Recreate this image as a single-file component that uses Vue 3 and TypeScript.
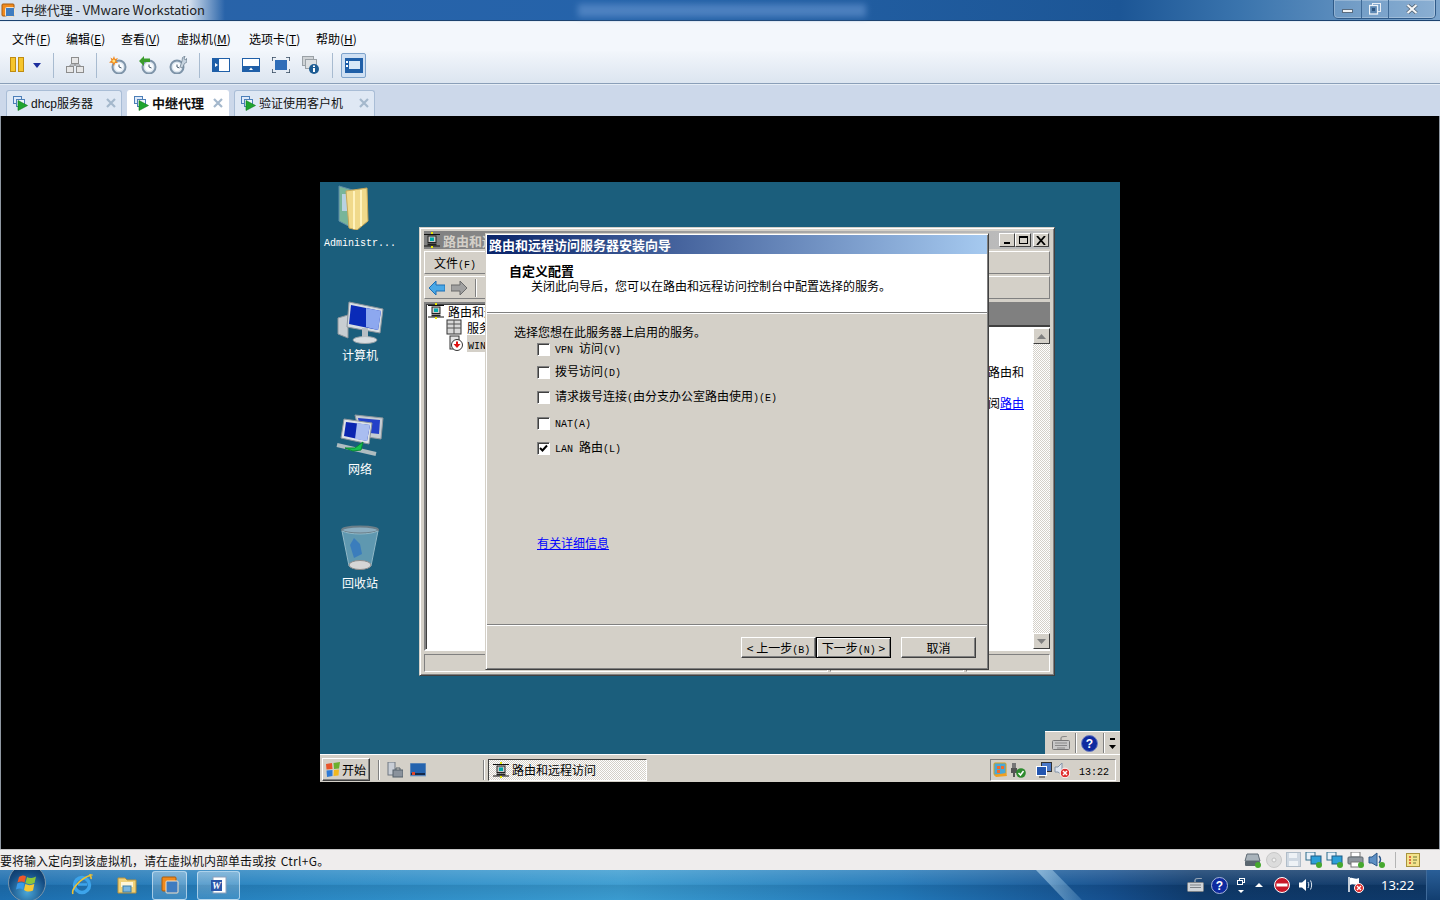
<script setup lang="ts">
const menus = [
  { label: '文件', key: 'F', width: 54 },
  { label: '编辑', key: 'E', width: 55 },
  { label: '查看', key: 'V', width: 56 },
  { label: '虚拟机', key: 'M', width: 72 },
  { label: '选项卡', key: 'T', width: 67 },
  { label: '帮助', key: 'H', width: 40 },
]

const tabs = [
  { name: 'dhcp服务器', width: 116, active: false },
  { name: '中继代理', width: 102, active: true },
  { name: '验证使用客户机', width: 141, active: false },
]

const services = [
  { text: 'VPN 访问(V)', checked: false, cls: 'r1' },
  { text: '拨号访问(D)', checked: false, cls: 'r2' },
  { text: '请求拨号连接(由分支办公室路由使用)(E)', checked: false, cls: 'r3' },
  { text: 'NAT(A)', checked: false, cls: 'r4' },
  { text: 'LAN 路由(L)', checked: true, cls: 'r5' },
]

// guest fonts: latin is half width, so it goes in a smaller mono
function segs(text: string) {
  return text.split(/([\x20-\x7e]+)/).filter(Boolean).map((t) => ({
    t,
    lat: /^[\x20-\x7e]+$/.test(t),
  }))
}
</script>

<template>
  <div class="app">
    <svg class="defs" width="0" height="0">
      <defs>
        <symbol id="vm" viewBox="0 0 16 16">
          <rect x="1.5" y="1.5" width="8" height="7" fill="#dfeafa" stroke="#4d7fb8" />
          <rect x="4.5" y="4.5" width="8" height="7" fill="#eef4fc" stroke="#4d7fb8" />
          <path d="M6 5.5 15.5 10.5 6 15.5Z" fill="#1fa52e" stroke="#0f7a1d" stroke-width=".6" />
        </symbol>
        <symbol id="route" viewBox="0 0 16 16">
          <path d="M0 2.5h16M0 14h16" stroke="#111" stroke-width="1" />
          <rect x="7" y="0" width="2" height="2" fill="#e8e800" />
          <rect x="7" y="14" width="2" height="2" fill="#e8e800" />
          <rect x="4" y="4" width="8" height="6.5" fill="#c9c9c9" stroke="#222" />
          <rect x="6" y="5.5" width="4" height="3.5" fill="#0aa" />
          <path d="M3.5 12.5h9" stroke="#222" stroke-width="2" />
        </symbol>
        <symbol id="clock" viewBox="0 0 18 18">
          <circle cx="10" cy="11" r="6.5" fill="#dce6ef" stroke="#7d93a8" stroke-width="2" />
          <circle cx="10" cy="11" r="4" fill="#fbfdff" />
          <path d="M10 8.5V11L12.5 12" fill="none" stroke="#44586a" />
        </symbol>
      </defs>
    </svg>

    <header class="titlebar">
      <svg class="app-ico" width="15" height="15" viewBox="0 0 15 15">
        <rect x="1" y="1" width="12" height="12" rx="1" fill="#f08a1d" stroke="#a85a0c" />
        <rect x="4.5" y="4.5" width="9" height="9" rx="1" fill="#3f7cc0" stroke="#f4e2c8" />
      </svg>
      <span class="title-text">中继代理 - VMware Workstation</span>
      <span class="title-blur"></span>
      <div class="win-btns">
        <button class="wb wb-min"><i></i></button>
        <button class="wb wb-max">
          <svg width="12" height="12" viewBox="0 0 12 12">
            <rect x="3.5" y=".5" width="8" height="8" fill="none" stroke="#e8eef5" />
            <rect x=".5" y="2.5" width="8" height="8.5" fill="#5c87b3" stroke="#eef3f8" stroke-width="1.3" />
            <rect x="3" y="5" width="3" height="3" fill="#2f557f" />
          </svg>
        </button>
        <button class="wb wb-close">
          <svg width="12" height="10" viewBox="0 0 12 10">
            <path d="M1.5 1 10.5 9M10.5 1 1.5 9" stroke="#50606f" stroke-width="3.6" />
            <path d="M1.5 1 10.5 9M10.5 1 1.5 9" stroke="#f4f6f8" stroke-width="2.2" />
          </svg>
        </button>
      </div>
    </header>

    <nav class="menubar">
      <span v-for="m in menus" :key="m.key" class="menu" :style="{ width: m.width + 'px' }">{{ m.label }}(<u>{{ m.key }}</u>)</span>
    </nav>

    <div class="toolbar">
      <svg class="t-pause" width="14" height="16" viewBox="0 0 14 16">
        <rect x=".5" y=".5" width="5" height="14" fill="#f6c52c" stroke="#c08c10" />
        <rect x="8.5" y=".5" width="5" height="14" fill="#f6c52c" stroke="#c08c10" />
      </svg>
      <svg width="8" height="5" viewBox="0 0 8 5"><path d="M0 0h8L4 5Z" fill="#1d2f9e" /></svg>
      <i class="t-sep"></i>
      <svg width="18" height="16" viewBox="0 0 18 16">
        <g fill="#e7e7e7" stroke="#8d8d8d">
          <rect x="5.5" y=".5" width="7" height="6" />
          <rect x=".5" y="9.5" width="7" height="6" />
          <rect x="10.5" y="9.5" width="7" height="6" />
        </g>
        <path d="M9 7v2M4 9V8h10v1" fill="none" stroke="#8d8d8d" />
      </svg>
      <i class="t-sep"></i>
      <svg width="18" height="18" viewBox="0 0 18 18">
        <use href="#clock" />
        <path d="M5 0 6 3 9 2 7 5 9 7 6 7 5 10 3.500 7 0 6.500 2.500 4.500 1.500 1.500 3.800 3Z" fill="#f0881e" />
        <circle cx="4.800" cy="5" r="1.500" fill="#ffe27a" />
      </svg>
      <svg width="18" height="18" viewBox="0 0 18 18">
        <use href="#clock" />
        <path d="M0 5 5 0V2.500H11V6H5V10Z" fill="#3a9c2c" />
      </svg>
      <svg width="18" height="18" viewBox="0 0 18 18">
        <use href="#clock" x="-2" />
        <path d="M11 11 13 5 13.500 1.500 16 0 15 3 17.500 4 18 2V6L15.500 7.500 13.500 12Z" fill="#c6d3df" stroke="#66788a" stroke-width=".7" />
      </svg>
      <i class="t-sep"></i>
      <svg width="18" height="14" viewBox="0 0 18 14">
        <rect width="18" height="14" fill="#1f5fa8" />
        <rect x="7" y="1" width="10" height="12" fill="#fff" />
        <path d="M3 5 6 7 3 9Z" fill="#fff" />
      </svg>
      <svg width="18" height="14" viewBox="0 0 18 14">
        <rect width="18" height="14" fill="#1f5fa8" />
        <rect x="1" y="1" width="16" height="7" fill="#fff" />
        <path d="M7 12 9 9.500 11 12Z" fill="#fff" />
      </svg>
      <svg width="18" height="16" viewBox="0 0 18 16">
        <rect x="3" y="3" width="12" height="10" fill="#2f6db8" />
        <path d="M0 4V0H4M14 0H18V4M18 12V16H14M4 16H0V12" fill="none" stroke="#33485e" stroke-width="1.500" />
      </svg>
      <svg width="18" height="18" viewBox="0 0 18 18">
        <rect x=".5" y=".5" width="11" height="9" fill="#cfd3d6" stroke="#9aa1a6" />
        <rect x="3.500" y="3.500" width="11" height="9" fill="#dde0e2" stroke="#9aa1a6" />
        <circle cx="12" cy="13" r="5" fill="#1d5c93" />
        <rect x="11" y="12" width="2" height="4" fill="#fff" />
        <rect x="11" y="9.500" width="2" height="1.500" fill="#fff" />
      </svg>
      <i class="t-sep"></i>
      <span class="t-on">
        <svg width="18" height="15" viewBox="0 0 18 15">
          <rect width="18" height="15" fill="#1f5fa8" />
          <rect x="4" y="3" width="11" height="8" fill="#d9e9f8" />
          <rect x="1" y="3" width="2" height="2" fill="#fff" />
          <rect x="1" y="7" width="2" height="2" fill="#fff" />
        </svg>
      </span>
    </div>

    <div class="tabstrip">
      <div
        v-for="t in tabs"
        :key="t.name"
        class="tab"
        :class="{ active: t.active }"
        :style="{ width: t.width + 'px' }"
      >
        <svg width="16" height="16"><use href="#vm" /></svg>
        <span class="tab-name">{{ t.name }}</span>
        <svg class="tab-x" width="10" height="10" viewBox="0 0 10 10">
          <path d="M1 1 9 9M9 1 1 9" stroke="#a4b8cc" stroke-width="2.200" />
        </svg>
      </div>
    </div>

    <main class="stage">
      <section class="guest">
        <div class="d-icon" style="left: 0; top: 2px">
          <svg width="48" height="46" viewBox="0 0 48 46">
            <path d="M3 2 20 7V46L3 37Z" fill="#78b59a" stroke="#5f8ca8" />
            <rect x="6" y="10" width="7" height="17" fill="#b8d2e2" />
            <path d="M10 7 31 4 32 37 21 46 13 44Z" fill="#f0d98a" stroke="#c7a85a" />
            <path d="M18 7V45M25 6V42" stroke="#fff2bc" stroke-width="2" />
          </svg>
          <span class="d-label"><span class="lat">Administr...</span></span>
        </div>
        <div class="d-icon" style="left: 0; top: 114px">
          <svg width="48" height="48" viewBox="0 0 48 48">
            <path d="M2 22 12 19V42L2 38Z" fill="#c8ced2" stroke="#8d969c" />
            <path d="M13 6 47 13 44 37 11 31Z" fill="#d6dde2" stroke="#8b959c" />
            <path d="M15 9 45 15 42 34 13 28Z" fill="#0a2bb8" />
            <path d="M30 12 45 15 42 34 30 31Z" fill="#8da8ef" />
            <ellipse cx="29" cy="44" rx="12" ry="3.500" fill="#d8dde0" stroke="#9aa3a8" />
            <path d="M26 32H32V41H26Z" fill="#b8bfc4" />
          </svg>
          <span class="d-label">计算机</span>
        </div>
        <div class="d-icon" style="left: 0; top: 228px">
          <svg width="48" height="48" viewBox="0 0 48 48">
            <path d="M19 5 47 8 45 29 24 26Z" fill="#c5ccd2" stroke="#8d969c" />
            <path d="M22 8 44 10 43 24 25 22Z" fill="#2440c8" />
            <path d="M8 9 36 13 33 34 5 28Z" fill="#dde2e6" stroke="#8d969c" />
            <path d="M10 12 34 15 31 31 8 26Z" fill="#0a25b0" />
            <path d="M21 13 34 15 31 31 19 29Z" fill="#a9bdf0" />
            <path d="M1 35 40 44" stroke="#aebcc0" stroke-width="4" />
            <path d="M9 38H19L27 32 25 40 17 41Z" fill="#18c24f" stroke="#0a8a34" />
          </svg>
          <span class="d-label">网络</span>
        </div>
        <div class="d-icon" style="left: 0; top: 342px">
          <svg width="48" height="48" viewBox="0 0 48 48">
            <ellipse cx="24" cy="6" rx="18" ry="3.500" fill="#8caec0" stroke="#6b7e88" stroke-width="2" />
            <path d="M6 7 13 42C18 46 30 46 35 42L42 7C34 11 14 11 6 7Z" fill="#5f98b0" stroke="#8fb7c6" />
            <path d="M14 21 18 14 24 20 26 30 18 34Z" fill="#2f74c0" opacity=".75" />
            <ellipse cx="24" cy="41" rx="11" ry="4.500" fill="#d6d6d6" stroke="#8d8d8d" />
          </svg>
          <span class="d-label">回收站</span>
        </div>

        <!-- mmc window behind the wizard -->
        <div class="win mmc">
          <div class="mmc-title">
            <svg width="16" height="16"><use href="#route" /></svg>
            <span class="mmc-name">路由和远程访问</span>
            <span class="caps">
              <button class="cap"><i class="c-min"></i></button>
              <button class="cap"><i class="c-max"></i></button>
              <button class="cap c-close"><svg width="10" height="9" viewBox="0 0 10 9"><path d="M1 0 9 9M9 0 1 9" stroke="#000" stroke-width="1.800" /></svg></button>
            </span>
          </div>
          <div class="mmc-row">
            <span class="gtext">文件<span class="lat">(F)</span></span>
          </div>
          <div class="mmc-row tools">
            <svg width="16" height="14" viewBox="0 0 16 14"><path d="M0 7 7 0V4H16V10H7V14Z" fill="#4aa8e6" stroke="#1c6fb5" /></svg>
            <svg width="16" height="14" viewBox="0 0 16 14"><path d="M16 7 9 0V4H0V10H9V14Z" fill="#a0a0a0" stroke="#6b6b6b" /></svg>
            <i class="tool-sep"></i>
            <svg width="12" height="14" viewBox="0 0 12 14"><rect x="1" y="1" width="9" height="12" fill="#f0d98a" /></svg>
          </div>
          <div class="mmc-main">
            <div class="tree">
              <div class="node">
                <svg width="16" height="16"><use href="#route" /></svg>
                <span>路由和远程访问</span>
              </div>
              <div class="node n2">
                <svg width="16" height="16" viewBox="0 0 16 16">
                  <rect x="1" y="1" width="14" height="14" fill="#d8d8d8" stroke="#333" />
                  <path d="M1 5h14M1 9h14M8 1v14" stroke="#555" />
                </svg>
                <span>服务器状态</span>
              </div>
              <div class="node n3">
                <svg width="16" height="16" viewBox="0 0 16 16">
                  <rect x="2" y="1" width="9" height="13" fill="#e4e4e4" stroke="#333" />
                  <circle cx="9" cy="10" r="5.500" fill="#fff" stroke="#333" />
                  <path d="M9 13 5.500 9H8V6.500H10V9H12.500Z" fill="#e01010" />
                </svg>
                <span class="sel"><span class="lat">WIN-SERVER</span></span>
              </div>
            </div>
            <div class="detail">
              <div class="detail-head"></div>
              <div class="detail-body">
                <div class="detail-text">
                  <p class="l1">要启用路由和</p>
                  <p class="l2">请查阅<a>路由</a></p>
                </div>
                <div class="vscroll">
                  <button class="sb-btn"><svg width="9" height="5" viewBox="0 0 9 5"><path d="M4.500 0 9 5H0Z" fill="#808080" /></svg></button>
                  <span class="sb-track"></span>
                  <button class="sb-btn"><svg width="9" height="5" viewBox="0 0 9 5"><path d="M4.500 5 9 0H0Z" fill="#808080" /></svg></button>
                </div>
              </div>
            </div>
          </div>
          <div class="mmc-status">
            <span class="st-cell"></span>
            <span class="st-cell w2"></span>
            <span class="st-cell w3"></span>
          </div>
        </div>

        <!-- setup wizard -->
        <div class="win wizard">
          <div class="wz-title">路由和远程访问服务器安装向导</div>
          <div class="wz-head">
            <h1>自定义配置</h1>
            <p>关闭此向导后，您可以在路由和远程访问控制台中配置选择的服务。</p>
          </div>
          <div class="wz-body">
            <p class="wz-intro">选择您想在此服务器上启用的服务。</p>
            <label v-for="s in services" :key="s.text" class="chk" :class="s.cls">
              <span class="box">
                <svg v-if="s.checked" width="9" height="9" viewBox="0 0 9 9">
                  <path d="M1 4 3.500 6.500 8 1.500" fill="none" stroke="#000" stroke-width="2" />
                </svg>
              </span>
              <span class="gtext">
                <span v-for="(p, i) in segs(s.text)" :key="i" :class="{ lat: p.lat }">{{ p.t }}</span>
              </span>
            </label>
            <a class="more">有关详细信息</a>
          </div>
          <div class="wz-foot">
            <button class="btn">&lt; 上一步<span class="lat">(B)</span></button>
            <button class="btn primary">下一步<span class="lat">(N)</span> &gt;</button>
            <button class="btn cancel">取消</button>
          </div>
        </div>

        <!-- guest bottom -->
        <div class="langbar">
          <svg width="18" height="14" viewBox="0 0 18 14">
            <rect x=".5" y="4.500" width="17" height="9" rx="1" fill="#c8c8c8" stroke="#777" />
            <path d="M3 7h12M3 9.500h12M5 12h8" stroke="#888" />
            <path d="M9 4V2C9 0 13 1 15 0" fill="none" stroke="#777" />
          </svg>
          <i class="lb-sep"></i>
          <svg width="17" height="17" viewBox="0 0 17 17">
            <circle cx="8.500" cy="8.500" r="8" fill="#0e2aa0" stroke="#6a7cc0" />
            <text x="8.500" y="13" text-anchor="middle" fill="#fff" font-size="12" font-weight="700" font-family="Liberation Sans, sans-serif">?</text>
          </svg>
          <i class="lb-sep"></i>
          <span class="lb-arrows">
            <i class="dash"></i>
            <svg width="7" height="4" viewBox="0 0 7 4"><path d="M0 0h7L3.500 4Z" fill="#000" /></svg>
          </span>
        </div>

        <div class="g-taskbar">
          <button class="g-start">
            <svg width="16" height="15" viewBox="0 0 16 15">
              <path d="M1 2 7 1 7.500 7 1.500 7.500Z" fill="#e8552a" />
              <path d="M8.500 1 15 0 14 6.500 9 7Z" fill="#6cb02e" />
              <path d="M1.500 8.500 7.500 8 7.500 14 2 15Z" fill="#2e7ad6" />
              <path d="M9 8 14 7.500 13.500 13.500 8.500 14Z" fill="#f2b81e" />
            </svg>
            <span>开始</span>
          </button>
          <i class="g-sep"></i>
          <svg class="ql1" width="16" height="16" viewBox="0 0 16 16">
            <rect x="1" y="0" width="7" height="13" fill="#c9ced6" stroke="#6f7780" />
            <rect x="6" y="8" width="10" height="7" fill="#8a929c" stroke="#55606b" />
            <path d="M9 8V6h4v2" fill="none" stroke="#55606b" />
          </svg>
          <svg class="ql2" width="16" height="14" viewBox="0 0 16 14">
            <rect width="16" height="13" fill="#2463ae" stroke="#8aa4c0" />
            <rect x="1" y="10" width="14" height="2" fill="#13284a" />
            <rect x="2" y="9" width="3" height="3" fill="#e0452a" />
          </svg>
          <i class="g-sep s2"></i>
          <div class="g-task">
            <svg width="16" height="16"><use href="#route" /></svg>
            <span>路由和远程访问</span>
          </div>
          <div class="g-tray">
            <svg width="15" height="16" viewBox="0 0 15 16">
              <rect x="1" y="1" width="12" height="12" rx="1" fill="#48a8d8" stroke="#d8a020" />
              <path d="M4 4h3v3H4zM8 4h3v3H8zM4 8h3v3H4z" fill="#f26b2a" />
              <path d="M1 13 13 11 14 14 3 15Z" fill="#f0a020" />
            </svg>
            <svg width="16" height="16" viewBox="0 0 16 16">
              <rect x="2" y="1" width="4" height="8" fill="#777" />
              <path d="M1 6h6v5H5v4H3v-4H1Z" fill="#555" />
              <circle cx="11" cy="11" r="4.800" fill="#2e8b2e" />
              <path d="M8.500 11 10.500 13 13.500 9" fill="none" stroke="#fff" stroke-width="1.500" />
            </svg>
            <svg class="tr3" width="16" height="16" viewBox="0 0 16 16">
              <rect x="5.500" y=".5" width="10" height="9" fill="#4a78c8" stroke="#333" />
              <rect x=".5" y="4.500" width="10" height="9" fill="#2456b0" stroke="#fff" />
              <path d="M3 15h6" stroke="#333" />
            </svg>
            <svg width="16" height="16" viewBox="0 0 16 16">
              <path d="M1 5H4L8 1V13L4 10H1Z" fill="#dfe5ee" stroke="#8494a8" />
              <circle cx="11" cy="11" r="4.800" fill="#e03030" stroke="#fff" />
              <path d="M9 9 13 13M13 9 9 13" stroke="#fff" stroke-width="1.500" />
            </svg>
            <span class="g-clock"><span class="lat">13:22</span></span>
          </div>
        </div>
      </section>
    </main>

    <footer class="statusbar">
      <span class="st-msg">要将输入定向到该虚拟机，请在虚拟机内部单击或按 <span class="st-key">Ctrl+G</span>。</span>
      <div class="devices">
        <svg width="18" height="16" viewBox="0 0 18 16">
          <path d="M3 2H14L16 9H1Z" fill="#a9b3bb" stroke="#5f6b75" />
          <rect x="1" y="9" width="15" height="5" rx="1" fill="#5a6670" />
          <circle cx="14" cy="13" r="3" fill="#46a82e" />
        </svg>
        <svg width="18" height="16" viewBox="0 0 18 16">
          <circle cx="9" cy="8" r="7.500" fill="#dcdcdc" stroke="#c8c8c8" />
          <circle cx="9" cy="8" r="2" fill="#f2f2f2" stroke="#c0c0c0" />
        </svg>
        <svg width="16" height="16" viewBox="0 0 16 16">
          <rect x=".5" y=".5" width="14" height="14" fill="#cfd8e2" stroke="#b0bcc8" />
          <rect x="3" y="1" width="8" height="5" fill="#eef2f6" />
          <rect x="3" y="9" width="9" height="5" fill="#eef2f6" />
        </svg>
        <svg width="18" height="16" viewBox="0 0 18 16">
          <rect x="1" y="0" width="9" height="8" fill="#e8f0f8" stroke="#2a6a8a" />
          <rect x="6" y="4" width="10" height="8" fill="#2d9fd8" stroke="#1c5d86" />
          <circle cx="14" cy="13" r="3" fill="#46a82e" />
        </svg>
        <svg width="18" height="16" viewBox="0 0 18 16">
          <rect x="1" y="0" width="9" height="8" fill="#e8f0f8" stroke="#2a6a8a" />
          <rect x="6" y="4" width="10" height="8" fill="#2d9fd8" stroke="#1c5d86" />
          <circle cx="14" cy="13" r="3" fill="#46a82e" />
        </svg>
        <svg width="18" height="16" viewBox="0 0 18 16">
          <rect x="4" y="0" width="9" height="5" fill="#fff" stroke="#777" />
          <rect x="1" y="5" width="15" height="7" rx="1" fill="#8d959d" stroke="#5f6870" />
          <rect x="4" y="10" width="9" height="5" fill="#fff" stroke="#777" />
          <circle cx="14" cy="13" r="3" fill="#46a82e" />
        </svg>
        <svg width="18" height="16" viewBox="0 0 18 16">
          <path d="M1 5H4L9 1V14L4 11H1Z" fill="#5d8fc4" stroke="#2a5688" />
          <path d="M11 4C13 6 13 9 11 11" fill="none" stroke="#2a5688" stroke-width="1.500" />
          <circle cx="14" cy="13" r="3" fill="#46a82e" />
        </svg>
        <i class="dev-sep"></i>
        <svg width="14" height="14" viewBox="0 0 14 14">
          <rect x=".5" y=".5" width="13" height="13" fill="#f4e38c" stroke="#a8923c" />
          <path d="M3 4h2M3 7h2M3 10h2" stroke="#d8452a" stroke-width="1.500" />
          <path d="M7 4h4M7 7h4M7 10h3" stroke="#6b7a3a" />
        </svg>
      </div>
    </footer>

    <div class="taskbar">
      <i class="streak"></i>
      <span class="orb">
        <svg width="22" height="22" viewBox="0 0 22 22">
          <path d="M3 5C6 3 8 3 10 4.500L8.500 10.500C6.500 9 4.500 9 1.500 10.500Z" fill="#f0582a" />
          <path d="M11 5C13 6.500 16 6.500 20 4.500L18.500 11C15 12.500 12.500 12.500 9.500 11Z" fill="#8cc63a" />
          <path d="M1.300 11.500C4 10 6 10 8.300 11.500L7 17.500C5 16 3 16 0 17.500Z" fill="#3a9ae8" />
          <path d="M9.300 12C12 13.500 15 13.500 18.300 12L17 18.500C14 20 11 20 8 18Z" fill="#f8c832" />
        </svg>
      </span>
      <svg class="tb-ie" width="22" height="22" viewBox="0 0 22 22">
        <circle cx="11" cy="11" r="7.500" fill="none" stroke="#3da4ea" stroke-width="3.500" />
        <path d="M7 10.500H16" stroke="#3da4ea" stroke-width="2.500" />
        <path d="M2 20C0 16 8 5 20 1 17 0 21 2 20 5" fill="none" stroke="#f2c230" stroke-width="1.600" />
      </svg>
      <svg class="tb-ex" width="20" height="20" viewBox="0 0 20 20">
        <path d="M1 3H8L10 5H19V18H1Z" fill="#f0d27a" stroke="#b8923c" />
        <rect x="4" y="7" width="12" height="5" fill="#fff6d8" />
        <rect x="6" y="11" width="8" height="6" fill="#7ab6e0" stroke="#3c7ea8" />
      </svg>
      <button class="tb-btn b1">
        <svg width="18" height="18" viewBox="0 0 18 18">
          <rect x="1" y="1" width="14" height="14" rx="1" fill="#f08a1d" stroke="#a85a0c" />
          <rect x="5" y="5" width="12" height="12" rx="1" fill="#3f7cc0" stroke="#f4e2c8" />
        </svg>
      </button>
      <button class="tb-btn b2">
        <svg width="18" height="18" viewBox="0 0 18 18">
          <rect x="3" y="1" width="13" height="16" fill="#fff" stroke="#8ca0bc" />
          <rect x="1" y="4" width="11" height="11" fill="#2b55a8" />
          <text x="6.500" y="13" text-anchor="middle" fill="#fff" font-size="10" font-weight="700" font-style="italic" font-family="Liberation Serif, serif">W</text>
        </svg>
      </button>
      <div class="tb-tray">
        <svg width="17" height="14" viewBox="0 0 17 14">
          <rect x=".5" y="4.500" width="16" height="9" rx="1" fill="#d0d4d8" stroke="#7c8288" />
          <path d="M3 7h11M3 9.500h11" stroke="#7c8288" />
          <path d="M8 4V2c0-2 4-1 7-2" fill="none" stroke="#c0c4c8" />
        </svg>
        <svg class="i-help" width="17" height="17" viewBox="0 0 17 17">
          <circle cx="8.500" cy="8.500" r="8" fill="#0e2aa0" stroke="#aab6d8" />
          <text x="8.500" y="13" text-anchor="middle" fill="#fff" font-size="12" font-weight="700" font-family="Liberation Sans, sans-serif">?</text>
        </svg>
        <span class="i-lang">
          <svg width="8" height="7" viewBox="0 0 8 7"><rect x="2.500" y=".5" width="5" height="4" fill="none" stroke="#fff" /><rect x=".5" y="2.500" width="5" height="4" fill="#0f3a6b" stroke="#fff" /></svg>
          <svg width="6" height="3" viewBox="0 0 6 3"><path d="M0 0h6L3 3Z" fill="#fff" /></svg>
        </span>
        <svg class="i-up" width="8" height="4" viewBox="0 0 8 4"><path d="M0 4h8L4 0Z" fill="#fff" /></svg>
        <svg class="i-stop" width="16" height="16" viewBox="0 0 16 16">
          <circle cx="8" cy="8" r="7.500" fill="#c8182a" stroke="#fff" />
          <rect x="2.500" y="6.500" width="11" height="3" fill="#fff" />
        </svg>
        <svg class="i-vol" width="16" height="14" viewBox="0 0 16 14">
          <path d="M1 4.500H4L8 1V13L4 9.500H1Z" fill="#fff" />
          <path d="M10 4C11 6 11 8 10 10M12.500 2.500C14 5 14 9 12.500 11.500" fill="none" stroke="#dfe8f2" />
        </svg>
        <svg class="i-flag" width="16" height="16" viewBox="0 0 16 16">
          <path d="M1 0V15" stroke="#fff" stroke-width="1.500" />
          <path d="M2 1C5 0 7 3 11 1V7C7 9 5 6 2 8Z" fill="#fff" />
          <circle cx="11" cy="11" r="4.500" fill="#e02828" stroke="#fff" />
          <path d="M9 9 13 13M13 9 9 13" stroke="#fff" stroke-width="1.300" />
        </svg>
        <span class="tb-time">13:22</span>
        <i class="show-desk"></i>
      </div>
    </div>
  </div>
</template>

<style>
html,
body {
  margin: 0;
  background: #000;
}
</style>

<style scoped>
.app {
  width: 1440px;
  height: 900px;
  display: flex;
  flex-direction: column;
  overflow: hidden;
  font-family: "Noto Sans CJK SC", "Noto Sans", sans-serif;
  font-size: 12px;
  color: #000;
}
.defs {
  position: absolute;
}
button {
  font: inherit;
  color: inherit;
  padding: 0;
  margin: 0;
}
p,
h1 {
  margin: 0;
}

/* host window */
.titlebar {
  position: relative;
  flex: none;
  height: 20px;
  display: flex;
  align-items: center;
  padding-left: 1px;
  gap: 5px;
  border-bottom: 1px solid #1c426f;
  background:
    linear-gradient(90deg, rgba(255, 255, 255, .82) 0, rgba(255, 255, 255, .78) 190px, rgba(255, 255, 255, 0) 225px),
    linear-gradient(90deg, #2a63a8 0, #2563aa 600px, #1c5696 1120px, #3a74ad 1240px, #7ca5cd 1440px);
}
.title-text {
  font-size: 13px;
  line-height: 20px;
  letter-spacing: -.1px;
  color: #222;
}
.title-blur {
  position: absolute;
  left: 578px;
  top: 4px;
  width: 288px;
  height: 13px;
  background: #5f8fcb;
  opacity: .7;
  filter: blur(3px);
}
.win-btns {
  position: absolute;
  right: 4px;
  top: 0;
  display: flex;
  height: 18px;
  border: 1px solid #2f5a88;
  border-top: 0;
  border-radius: 0 0 5px 5px;
  box-shadow: 0 0 0 1px rgba(255, 255, 255, .25) inset;
}
.wb {
  border: 0;
  border-right: 1px solid #3f6a97;
  background: rgba(255, 255, 255, .12);
  display: flex;
  align-items: center;
  justify-content: center;
}
.wb-min {
  width: 28px;
}
.wb-min i {
  display: block;
  width: 11px;
  height: 4px;
  margin-top: 3px;
  background: #f0f3f6;
  border: 1px solid #5a6c7f;
  box-sizing: border-box;
}
.wb-max {
  width: 27px;
}
.wb-close {
  width: 46px;
  border-right: 0;
}

.menubar {
  flex: none;
  height: 21px;
  padding: 8px 0 0 12px;
  display: flex;
  line-height: 18px;
  border-top: 1px solid #e4edf6;
  background: #f3f7fc;
}
.menu {
  flex: none;
  white-space: nowrap;
}
.menu u {
  text-underline-offset: 1px;
}
.toolbar {
  flex: none;
  height: 33px;
  padding: 0 0 4px 10px;
  box-sizing: border-box;
  display: flex;
  align-items: center;
  gap: 12px;
  border-bottom: 1px solid #8a9fb8;
  background: linear-gradient(#f2f6fb, #dce5f0);
}
.t-pause {
  margin-right: -3px;
}
.t-sep {
  width: 1px;
  height: 25px;
  background: #a8bbd0;
}
.t-on {
  margin-left: -4px;
  width: 25px;
  height: 25px;
  box-sizing: border-box;
  display: flex;
  align-items: center;
  justify-content: center;
  background: #cfe0f3;
  border: 1px solid #7ea3cb;
  border-radius: 2px;
}

.tabstrip {
  flex: none;
  height: 32px;
  box-sizing: border-box;
  padding: 5px 0 0 6px;
  display: flex;
  gap: 5px;
  background: #ccd8ea;
  border-top: 1px solid #e5edf6;
}
.tab {
  box-sizing: border-box;
  display: flex;
  align-items: center;
  gap: 3px;
  padding: 0 5px 2px;
  background: #dfe8f4;
  border: 1px solid #a9bdd6;
  border-bottom: 0;
  border-radius: 3px 3px 0 0;
  color: #111;
  font-family: "Liberation Sans", "Noto Sans CJK SC", sans-serif;
}
.tab.active {
  background: #fff;
  border-color: #fff;
  font-size: 13px;
  font-weight: 700;
}
.tab-name {
  flex: 1;
  white-space: nowrap;
}
.tab-x {
  flex: none;
}

.stage {
  flex: 1;
  display: flex;
  align-items: center;
  justify-content: center;
  background: #000;
  border-left: 1px solid #8f98a2;
  border-right: 1px solid #8f98a2;
}

/* guest desktop */
.guest {
  position: relative;
  width: 800px;
  height: 600px;
  margin-bottom: 1px;
  flex: none;
  background: #1b5e7c;
  font-size: 12px;
}
.lat {
  font-family: "Liberation Mono", monospace;
  font-size: 10px;
}
.d-icon {
  position: absolute;
  width: 80px;
  display: flex;
  flex-direction: column;
  align-items: center;
  gap: 4px;
}
.d-label {
  color: #fff;
  line-height: 14px;
  white-space: nowrap;
}

.win {
  position: absolute;
  box-sizing: border-box;
  background: #d4d0c8;
  border: 1px solid;
  border-color: #d4d0c8 #404040 #404040 #d4d0c8;
  box-shadow: inset 1px 1px 0 #fff, inset -1px -1px 0 #808080;
}

.mmc {
  left: 99px;
  top: 45px;
  width: 636px;
  height: 449px;
  padding: 3px 4px 3px 4px;
  display: flex;
  flex-direction: column;
}
.mmc-title {
  flex: none;
  height: 18px;
  display: flex;
  align-items: center;
  gap: 3px;
  background: linear-gradient(90deg, #808080, #c0c0c0);
  color: #d4d0c8;
  font-size: 13px;
  font-weight: 700;
}
.caps {
  margin-left: auto;
  margin-right: 1px;
  display: flex;
  gap: 0;
}
.cap {
  width: 16px;
  height: 14px;
  background: #d4d0c8;
  border: 1px solid;
  border-color: #fff #404040 #404040 #fff;
  box-sizing: border-box;
  display: flex;
  align-items: center;
  justify-content: center;
}
.c-close {
  margin-left: 2px;
}
.c-min {
  width: 6px;
  height: 2px;
  background: #000;
  margin-top: 6px;
}
.c-max {
  width: 9px;
  height: 8px;
  box-sizing: border-box;
  border: 1px solid #000;
  border-top-width: 2px;
}
.mmc-row {
  flex: none;
  height: 23px;
  margin-top: 2px;
  box-sizing: border-box;
  padding-left: 9px;
  display: flex;
  align-items: center;
  border: 1px solid;
  border-color: #fff #808080 #808080 #fff;
}
.gtext {
  white-space: nowrap;
}
.tools {
  padding-left: 4px;
  gap: 6px;
}
.tool-sep {
  width: 1px;
  height: 18px;
  background: #808080;
  box-shadow: 1px 0 0 #fff;
  margin: 0 2px;
}
.mmc-main {
  flex: 1;
  margin-top: 3px;
  display: flex;
  min-height: 0;
  background: #fff;
  border: 2px solid;
  border-color: #808080 #fff #fff #808080;
  border-right: 0;
  box-shadow: inset 1px 1px 0 #404040;
}
.tree {
  width: 200px;
  flex: none;
  margin-top: -1px;
  padding-left: 2px;
}
.node {
  height: 16px;
  display: flex;
  align-items: center;
  gap: 4px;
  white-space: nowrap;
}
.n2 {
  margin-left: 18px;
  gap: 5px;
}
.n3 {
  margin-left: 20px;
  gap: 3px;
}
.sel {
  background: #d4d0c8;
  padding: 0 4px 0 1px;
}
.detail {
  flex: 1;
  display: flex;
  flex-direction: column;
}
.detail-head {
  flex: none;
  height: 21px;
  background: #808080;
  border-bottom: 2px solid #404040;
}
.detail-body {
  flex: 1;
  min-height: 0;
  display: flex;
}
.detail-text {
  flex: 1;
  text-align: right;
  padding: 36px 9px 0 0;
  white-space: nowrap;
}
.l2 {
  margin-top: 14px;
}
.l2 a {
  color: #00f;
  text-decoration: underline;
}
.vscroll {
  width: 17px;
  flex: none;
  display: flex;
  flex-direction: column;
  margin-top: 1px;
}
.sb-btn {
  height: 16px;
  background: #d4d0c8;
  border: 1px solid;
  border-color: #fff #404040 #404040 #fff;
  display: flex;
  align-items: center;
  justify-content: center;
}
.sb-track {
  flex: 1;
  background: repeating-conic-gradient(#d4d0c8 0 25%, #fff 0 50%) 0 0 / 2px 2px;
}
.mmc-status {
  flex: none;
  height: 18px;
  margin-top: 3px;
  display: flex;
  gap: 2px;
}
.st-cell {
  flex: 1;
  border: 1px solid;
  border-color: #808080 #fff #fff #808080;
}
.st-cell.w2 {
  flex: none;
  width: 132px;
}
.st-cell.w3 {
  flex: none;
  width: 82px;
}

.wizard {
  left: 165px;
  top: 51px;
  width: 504px;
  height: 437px;
  padding: 1px 1px 1px;
  display: flex;
  flex-direction: column;
}
.wz-title {
  flex: none;
  height: 19px;
  padding-left: 2px;
  line-height: 19px;
  color: #fff;
  font-size: 13px;
  font-weight: 700;
  background: linear-gradient(90deg, #0a246a, #a6caf0);
  white-space: nowrap;
}
.wz-head {
  flex: none;
  height: 59px;
  box-sizing: border-box;
  padding: 9px 0 0 22px;
  background: #fff;
  border-bottom: 1px solid #808080;
  box-shadow: 0 1px 0 #fff;
}
.wz-head h1 {
  font-size: 13px;
  line-height: 16px;
}
.wz-head p {
  margin-left: 22px;
  line-height: 14px;
  white-space: nowrap;
}
.wz-body {
  flex: 1;
  margin-top: 1px;
  padding: 11px 0 0 27px;
  display: flex;
  flex-direction: column;
  border-bottom: 1px solid #808080;
  box-shadow: 0 1px 0 #fff;
}
.wz-intro {
  line-height: 14px;
}
.chk {
  display: flex;
  align-items: center;
  gap: 5px;
  margin-left: 23px;
  height: 14px;
  line-height: 14px;
}
.chk.r1 {
  margin-top: 3px;
}
.chk.r2 {
  margin-top: 9px;
}
.chk.r3 {
  margin-top: 11px;
}
.chk.r4 {
  margin-top: 12px;
}
.chk.r5 {
  margin-top: 11px;
}
.box {
  width: 13px;
  height: 13px;
  box-sizing: border-box;
  display: flex;
  align-items: center;
  justify-content: center;
  background: #fff;
  border: 1px solid;
  border-color: #808080 #fff #fff #808080;
  box-shadow: inset 1px 1px 0 #404040;
}
.more {
  margin: 81px 0 0 23px;
  color: #00f;
  text-decoration: underline;
  line-height: 14px;
}
.wz-foot {
  flex: none;
  height: 42px;
  box-sizing: border-box;
  margin-top: 1px;
  display: flex;
  align-items: flex-start;
  padding: 11px 0 0 254px;
}
.btn {
  width: 75px;
  height: 21px;
  box-sizing: border-box;
  background: #d4d0c8;
  border: 1px solid;
  border-color: #fff #404040 #404040 #fff;
  box-shadow: inset -1px -1px 0 #808080;
  font-size: 12px;
  white-space: nowrap;
}
.btn.primary {
  border: 1px solid #000;
  box-shadow: inset 1px 1px 0 #fff, inset -1px -1px 0 #808080;
}
.btn.cancel {
  margin-left: 10px;
}

.langbar {
  position: absolute;
  right: 0;
  top: 549px;
  width: 75px;
  height: 23px;
  box-sizing: border-box;
  padding: 0 3px 0 7px;
  display: flex;
  align-items: center;
  gap: 5px;
  background: #d4d0c8;
  border-top: 1px solid #fff;
}
.lb-sep {
  width: 1px;
  height: 20px;
  background: #808080;
  box-shadow: 1px 0 0 #fff;
}
.lb-arrows {
  display: flex;
  flex-direction: column;
  align-items: center;
  gap: 5px;
}
.dash {
  width: 5px;
  height: 2px;
  background: #000;
}
.g-taskbar {
  position: absolute;
  left: 0;
  right: 0;
  bottom: 0;
  height: 28px;
  box-sizing: border-box;
  padding: 3px 4px 1px 2px;
  display: flex;
  align-items: center;
  background: #d4d0c8;
  border-top: 1px solid #fff;
}
.g-start {
  width: 48px;
  height: 23px;
  box-sizing: border-box;
  display: flex;
  align-items: center;
  gap: 1px;
  padding-left: 2px;
  font-size: 12px;
  background: #d4d0c8;
  border: 1px solid;
  border-color: #fff #404040 #404040 #fff;
  box-shadow: inset -1px -1px 0 #808080;
}
.g-sep {
  width: 1px;
  height: 20px;
  margin-left: 8px;
  background: #808080;
  box-shadow: 1px 0 0 #fff;
}
.ql1 {
  margin-left: 8px;
}
.ql2 {
  margin-left: 7px;
}
.s2 {
  margin-left: 57px;
}
.g-task {
  width: 159px;
  height: 22px;
  margin-left: 4px;
  box-sizing: border-box;
  display: flex;
  align-items: center;
  gap: 3px;
  padding-left: 4px;
  border: 1px solid;
  border-color: #404040 #fff #fff #404040;
  background: repeating-conic-gradient(#d4d0c8 0 25%, #fff 0 50%) 0 0 / 2px 2px;
}
.g-tray {
  margin-left: auto;
  width: 126px;
  height: 22px;
  box-sizing: border-box;
  padding-left: 2px;
  display: flex;
  align-items: center;
  gap: 2px;
  border: 1px solid;
  border-color: #808080 #fff #fff #808080;
}
.tr3 {
  margin-left: 8px;
}
.g-clock {
  margin-left: 7px;
}

/* host bottom */
.statusbar {
  flex: none;
  height: 21px;
  box-sizing: border-box;
  display: flex;
  align-items: center;
  justify-content: space-between;
  padding-right: 20px;
  background: #efeded;
  border-top: 1px solid #c6c6c6;
  color: #111;
}
.st-msg {
  word-spacing: 2px;
}
.st-key {
  letter-spacing: .3px;
}
.devices {
  display: flex;
  align-items: center;
  gap: 3px;
}
.dev-sep {
  width: 1px;
  height: 16px;
  background: #b4b4b4;
  margin: 0 7px 0 6px;
}
.taskbar {
  position: relative;
  flex: none;
  height: 30px;
  display: flex;
  align-items: center;
  overflow: hidden;
  background:
    linear-gradient(rgba(255, 255, 255, .16), rgba(255, 255, 255, .03) 48%, rgba(0, 0, 0, .08) 50%, rgba(0, 0, 0, 0)),
    linear-gradient(90deg, #1c6dae 0, #2a88c4 300px, #3a9bd0 620px, #2278b8 900px, #154f8e 1110px, #0f3a6b 1200px, #0e3868 1440px);
}
.streak {
  position: absolute;
  left: 1036px;
  top: 0;
  width: 46px;
  height: 30px;
  background: linear-gradient(90deg, rgba(190, 225, 245, .6), rgba(150, 200, 235, .2));
  clip-path: polygon(0 0, 36% 0, 100% 100%, 62% 100%);
}
.orb {
  position: relative;
  margin: -4px 0 0 8px;
  width: 38px;
  height: 38px;
  flex: none;
  border-radius: 50%;
  display: flex;
  align-items: center;
  justify-content: center;
  background: radial-gradient(circle at 50% 75%, #4aa6d8, #134a80 60%, #0d2c50);
  border: 1px solid #7a94a8;
  box-sizing: border-box;
}
.tb-ie {
  position: relative;
  margin-left: 25px;
}
.tb-ex {
  position: relative;
  margin-left: 24px;
}
.tb-btn {
  position: relative;
  height: 29px;
  box-sizing: border-box;
  display: flex;
  align-items: center;
  justify-content: center;
  border: 1px solid rgba(230, 245, 255, .6);
  border-radius: 3px;
  background: linear-gradient(rgba(255, 255, 255, .35), rgba(255, 255, 255, .1));
}
.b1 {
  width: 35px;
  margin-left: 15px;
}
.b2 {
  width: 43px;
  margin-left: 10px;
}
.tb-tray {
  position: absolute;
  left: 1187px;
  right: 0;
  top: 0;
  bottom: 0;
  display: flex;
  align-items: center;
}
.i-help {
  margin-left: 7px;
}
.i-lang {
  margin-left: 9px;
  display: flex;
  flex-direction: column;
  align-items: center;
  gap: 5px;
}
.i-up {
  margin-left: 10px;
}
.i-stop {
  margin-left: 11px;
}
.i-vol {
  margin-left: 8px;
}
.i-flag {
  margin-left: 34px;
}
.tb-time {
  margin-left: 17px;
  color: #fff;
  font-family: "Noto Sans", sans-serif;
  font-size: 13px;
}
.show-desk {
  margin-left: auto;
  width: 13px;
  height: 30px;
  border-left: 1px solid #3f6a9a;
  background: linear-gradient(#2a5f98, #123e70);
}
</style>
